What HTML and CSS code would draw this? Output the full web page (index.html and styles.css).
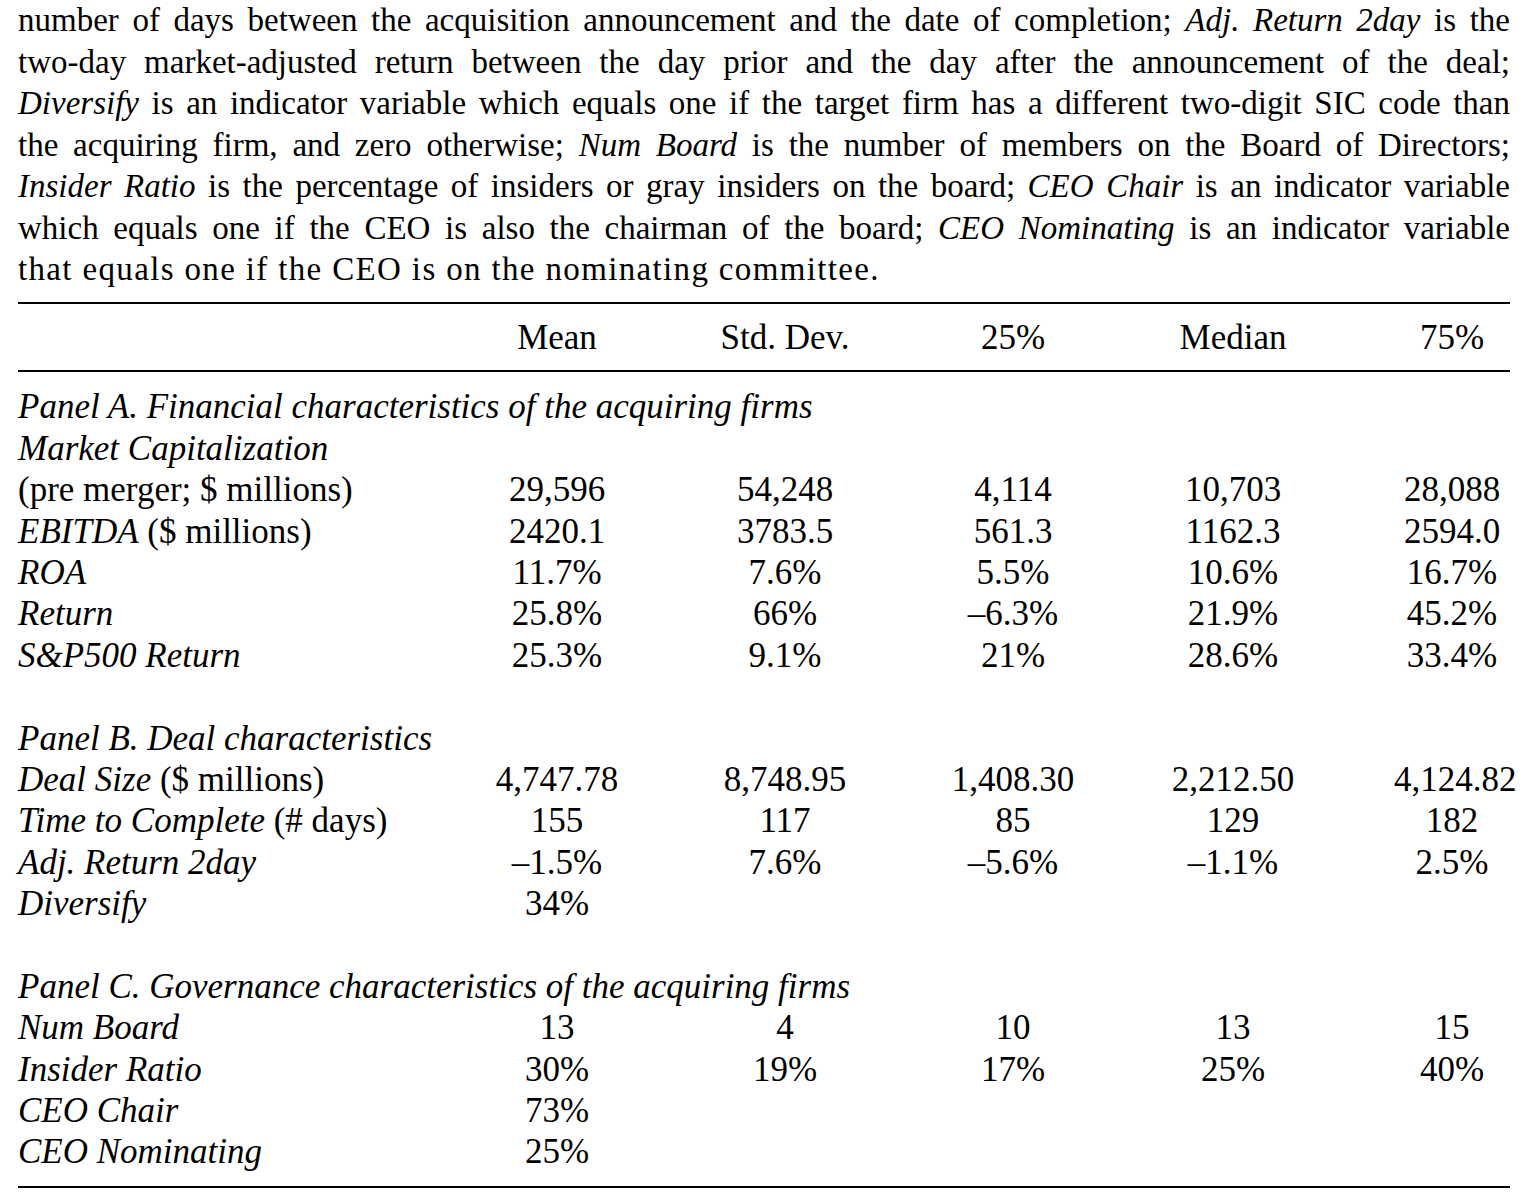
FILE: index.html
```html
<!DOCTYPE html>
<html lang="en">
<head>
<meta charset="utf-8">
<title>Summary statistics</title>
<link rel="stylesheet" href="styles.css">
</head>
<body>
<div class="page">
  <p class="note">
    <span class="ln">number of days between the acquisition announcement and the date of completion; <i>Adj. Return 2day</i> is the</span>
    <span class="ln">two-day market-adjusted return between the day prior and the day after the announcement of the deal;</span>
    <span class="ln"><i>Diversify</i> is an indicator variable which equals one if the target firm has a different two-digit SIC code than</span>
    <span class="ln">the acquiring firm, and zero otherwise; <i>Num Board</i> is the number of members on the Board of Directors;</span>
    <span class="ln"><i>Insider Ratio</i> is the percentage of insiders or gray insiders on the board; <i>CEO Chair</i> is an indicator variable</span>
    <span class="ln">which equals one if the CEO is also the chairman of the board; <i>CEO Nominating</i> is an indicator variable</span>
    <span class="ln last">that equals one if the CEO is on the nominating committee.</span>
  </p>

  <div class="stats">
    <div class="row head">
      <div class="lab"></div>
      <div class="num">Mean</div>
      <div class="num">Std. Dev.</div>
      <div class="num">25%</div>
      <div class="num">Median</div>
      <div class="num last">75%</div>
    </div>

    <div class="body">
      <div class="row"><div class="lab panel"><i>Panel A. Financial characteristics of the acquiring firms</i></div></div>
      <div class="row"><div class="lab"><i>Market Capitalization</i></div></div>
      <div class="row">
        <div class="lab">(pre merger; $ millions)</div>
        <div class="num">29,596</div><div class="num">54,248</div><div class="num">4,114</div><div class="num">10,703</div><div class="num last">28,088</div>
      </div>
      <div class="row">
        <div class="lab"><i>EBITDA</i> ($ millions)</div>
        <div class="num">2420.1</div><div class="num">3783.5</div><div class="num">561.3</div><div class="num">1162.3</div><div class="num last">2594.0</div>
      </div>
      <div class="row">
        <div class="lab"><i>ROA</i></div>
        <div class="num">11.7%</div><div class="num">7.6%</div><div class="num">5.5%</div><div class="num">10.6%</div><div class="num last">16.7%</div>
      </div>
      <div class="row">
        <div class="lab"><i>Return</i></div>
        <div class="num">25.8%</div><div class="num">66%</div><div class="num">–6.3%</div><div class="num">21.9%</div><div class="num last">45.2%</div>
      </div>
      <div class="row">
        <div class="lab"><i>S&amp;P500 Return</i></div>
        <div class="num">25.3%</div><div class="num">9.1%</div><div class="num">21%</div><div class="num">28.6%</div><div class="num last">33.4%</div>
      </div>
      <div class="row gap"></div>

      <div class="row"><div class="lab panel"><i>Panel B. Deal characteristics</i></div></div>
      <div class="row">
        <div class="lab"><i>Deal Size</i> ($ millions)</div>
        <div class="num">4,747.78</div><div class="num">8,748.95</div><div class="num">1,408.30</div><div class="num">2,212.50</div><div class="num last">4,124.82</div>
      </div>
      <div class="row">
        <div class="lab"><i>Time to Complete</i> (# days)</div>
        <div class="num">155</div><div class="num">117</div><div class="num">85</div><div class="num">129</div><div class="num last">182</div>
      </div>
      <div class="row">
        <div class="lab"><i>Adj. Return 2day</i></div>
        <div class="num">–1.5%</div><div class="num">7.6%</div><div class="num">–5.6%</div><div class="num">–1.1%</div><div class="num last">2.5%</div>
      </div>
      <div class="row">
        <div class="lab"><i>Diversify</i></div>
        <div class="num">34%</div>
      </div>
      <div class="row gap"></div>

      <div class="row"><div class="lab panel"><i>Panel C. Governance characteristics of the acquiring firms</i></div></div>
      <div class="row">
        <div class="lab"><i>Num Board</i></div>
        <div class="num">13</div><div class="num">4</div><div class="num">10</div><div class="num">13</div><div class="num last">15</div>
      </div>
      <div class="row">
        <div class="lab"><i>Insider Ratio</i></div>
        <div class="num">30%</div><div class="num">19%</div><div class="num">17%</div><div class="num">25%</div><div class="num last">40%</div>
      </div>
      <div class="row">
        <div class="lab"><i>CEO Chair</i></div>
        <div class="num">73%</div>
      </div>
      <div class="row">
        <div class="lab"><i>CEO Nominating</i></div>
        <div class="num">25%</div>
      </div>
    </div>
  </div>
</div>
</body>
</html>
```

FILE: styles.css
```css
html, body {
  margin: 0;
  padding: 0;
  background: #ffffff;
  color: #000000;
  font-family: "Liberation Serif", "Times New Roman", serif;
}

.page {
  width: 1492px;
  padding: 0 17px 0 18px;
}

.note {
  margin: 0;
  font-size: 33px;
  line-height: 41.5px;
  letter-spacing: 0;
}

.note .ln {
  display: block;
  white-space: nowrap;
  text-align: justify;
  text-align-last: justify;
}

.note .ln.last {
  text-align-last: left;
  letter-spacing: 1.35px;
}

.stats {
  margin-top: 11.5px;
  font-size: 35px;
  line-height: 41.4px;
  border-bottom: 2px solid #000;
}

.row {
  display: grid;
  grid-template-columns: 425px 228px 228px 228px 212px 1fr;
  height: 41.4px;
}

.row .lab.panel {
  grid-column: 1 / -1;
  white-space: nowrap;
}

.lab {
  white-space: nowrap;
}

.num {
  text-align: center;
  white-space: nowrap;
}

.num.last {
  padding-left: 55px;
}

.head {
  border-top: 2px solid #000;
  border-bottom: 2px solid #000;
  padding: 11.5px 0 13px;
  box-sizing: content-box;
}

.head .num {
  position: relative;
  top: 1px;
}

.body {
  padding: 14.5px 0 13px;
}
```
